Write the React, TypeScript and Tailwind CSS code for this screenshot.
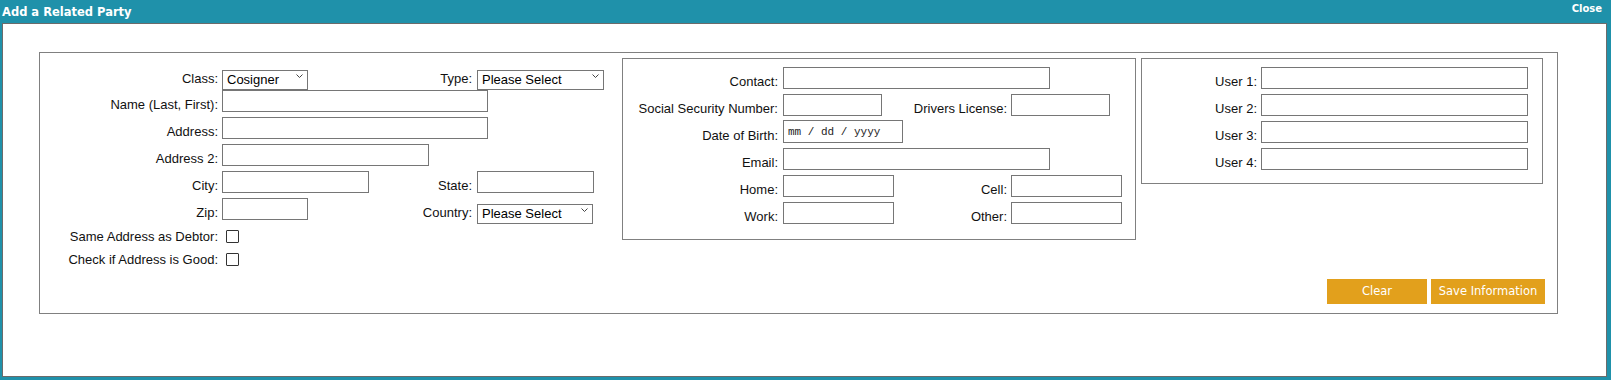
import React from "react";

const lbl =
  "shrink-0 whitespace-nowrap text-right font-['Liberation_Sans',Arial,sans-serif] text-[13px] leading-[15px] text-[#111]";

const Label = ({ className, children }: { className: string; children: React.ReactNode }) => (
  <label className={`${lbl} ${className}`}>{children}</label>
);

const Box = ({ className }: { className: string }) => (
  <input
    type="text"
    className={`h-[22px] shrink-0 border border-[#767676] bg-white outline-none ${className}`}
  />
);

const Pick = ({ className, value }: { className: string; value: string }) => (
  <div className={`relative h-[20px] shrink-0 ${className}`}>
    <select className="h-full w-full appearance-none rounded-none border border-[#767676] bg-white pl-[4px] font-['Liberation_Sans',Arial,sans-serif] text-[13px] leading-[15px] text-black outline-none">
      <option>{value}</option>
    </select>
    <svg
      className="pointer-events-none absolute right-[5px] top-1/2 -translate-y-1/2"
      width="7"
      height="4"
      viewBox="0 0 7 4"
    >
      <polyline points="0.5,0.5 3.5,3.5 6.5,0.5" fill="none" stroke="#444" strokeWidth="1" />
    </svg>
  </div>
);

const Check = () => (
  <input
    type="checkbox"
    className="ml-[8px] h-[13px] w-[13px] shrink-0 appearance-none rounded-[1px] border border-[#333] bg-white"
  />
);

const App = () => {
  return (
    <div className="flex h-[380px] w-[1611px] flex-col bg-[#1f91aa]">
      {/* Header */}
      <div className="flex h-[23px] shrink-0 justify-between">
        <div className="self-center pl-[2px] font-['DejaVu_Sans',Verdana,sans-serif] text-[11.5px] font-bold leading-[14px] text-white">
          Add a Related Party
        </div>
        <div className="mt-[3px] pr-[9px] font-['DejaVu_Sans',Verdana,sans-serif] text-[10px] font-bold leading-[12px] text-white">
          Close
        </div>
      </div>

      {/* Body */}
      <div className="mb-[3px] ml-[2px] mr-[4px] flex-1 border border-[#6b6b6b] bg-white">
        <div className="ml-[36px] mt-[28px] flex h-[262px] w-[1519px] border border-[#808080] pb-[9px] pr-[12px] pt-[5px]">
          {/* Left column */}
          <div className="w-[582px] shrink-0 self-start pt-[8px]">
            <div className="flex h-[20px] items-end">
              <Label className="w-[178px]">Class:</Label>
              <Pick className="ml-[4px] w-[86px]" value="Cosigner" />
              <Label className="w-[164px]">Type:</Label>
              <Pick className="ml-[5px] w-[127px]" value="Please Select" />
            </div>
            <div className="mt-[4px] flex h-[22px] items-end">
              <Label className="w-[178px]">Name (Last, First):</Label>
              <Box className="ml-[4px] w-[266px]" />
            </div>
            <div className="mt-[5px] flex h-[22px] items-end">
              <Label className="w-[178px]">Address:</Label>
              <Box className="ml-[4px] w-[266px]" />
            </div>
            <div className="mt-[5px] flex h-[22px] items-end">
              <Label className="w-[178px]">Address 2:</Label>
              <Box className="ml-[4px] w-[207px]" />
            </div>
            <div className="mt-[5px] flex h-[22px] items-end">
              <Label className="w-[178px]">City:</Label>
              <Box className="ml-[4px] w-[147px]" />
              <Label className="w-[103px]">State:</Label>
              <Box className="ml-[5px] w-[117px]" />
            </div>
            <div className="mt-[5px] flex h-[22px] items-end">
              <Label className="w-[178px]">Zip:</Label>
              <Box className="ml-[4px] w-[86px]" />
              <Label className="w-[164px]">Country:</Label>
              <Pick className="ml-[5px] w-[116px]" value="Please Select" />
            </div>
            <div className="mt-[7px] flex h-[18px] items-center">
              <Label className="w-[178px]">Same Address as Debtor:</Label>
              <Check />
            </div>
            <div className="mt-[5px] flex h-[18px] items-center">
              <Label className="w-[178px]">Check if Address is Good:</Label>
              <Check />
            </div>
          </div>

          {/* Contact box */}
          <div className="flex h-[182px] w-[514px] shrink-0 flex-col gap-[5px] self-start border border-[#808080] pt-[8px]">
            <div className="flex h-[22px] items-end">
              <Label className="w-[155px]">Contact:</Label>
              <Box className="ml-[5px] w-[267px]" />
            </div>
            <div className="flex h-[22px] items-end">
              <Label className="w-[155px]">Social Security Number:</Label>
              <Box className="ml-[5px] w-[99px]" />
              <Label className="w-[125px]">Drivers License:</Label>
              <Box className="ml-[4px] w-[99px]" />
            </div>
            <div className="flex h-[22px] items-end">
              <Label className="w-[155px]">Date of Birth:</Label>
              <input
                type="text"
                placeholder="mm / dd / yyyy"
                className="ml-[5px] h-[23px] w-[120px] shrink-0 border border-[#767676] bg-white pl-[4px] font-['Liberation_Mono','Courier_New',monospace] text-[11px] outline-none placeholder:text-[#222]"
              />
            </div>
            <div className="flex h-[22px] items-end">
              <Label className="w-[155px]">Email:</Label>
              <Box className="ml-[5px] w-[267px]" />
            </div>
            <div className="flex h-[22px] items-end">
              <Label className="w-[155px]">Home:</Label>
              <Box className="ml-[5px] w-[111px]" />
              <Label className="w-[113px]">Cell:</Label>
              <Box className="ml-[4px] w-[111px]" />
            </div>
            <div className="flex h-[22px] items-end">
              <Label className="w-[155px]">Work:</Label>
              <Box className="ml-[5px] w-[111px]" />
              <Label className="w-[113px]">Other:</Label>
              <Box className="ml-[4px] w-[111px]" />
            </div>
          </div>

          {/* User fields + actions */}
          <div className="ml-[5px] flex w-[404px] shrink-0 flex-col">
            <div className="flex h-[126px] w-[402px] flex-col gap-[5px] border border-[#808080] pt-[8px]">
              {["User 1:", "User 2:", "User 3:", "User 4:"].map((u) => (
                <div key={u} className="flex h-[22px] items-end">
                  <Label className="w-[115px]">{u}</Label>
                  <Box className="ml-[4px] w-[267px]" />
                </div>
              ))}
            </div>
            <div className="mt-auto flex justify-end gap-[4px]">
              <button className="h-[25px] w-[100px] bg-[#e2a01c] font-['DejaVu_Sans',Verdana,sans-serif] text-[11.5px] text-white">
                Clear
              </button>
              <button className="h-[25px] w-[114px] bg-[#e2a01c] font-['DejaVu_Sans',Verdana,sans-serif] text-[11.5px] text-white">
                Save Information
              </button>
            </div>
          </div>
        </div>
      </div>
    </div>
  );
};

export default App;
